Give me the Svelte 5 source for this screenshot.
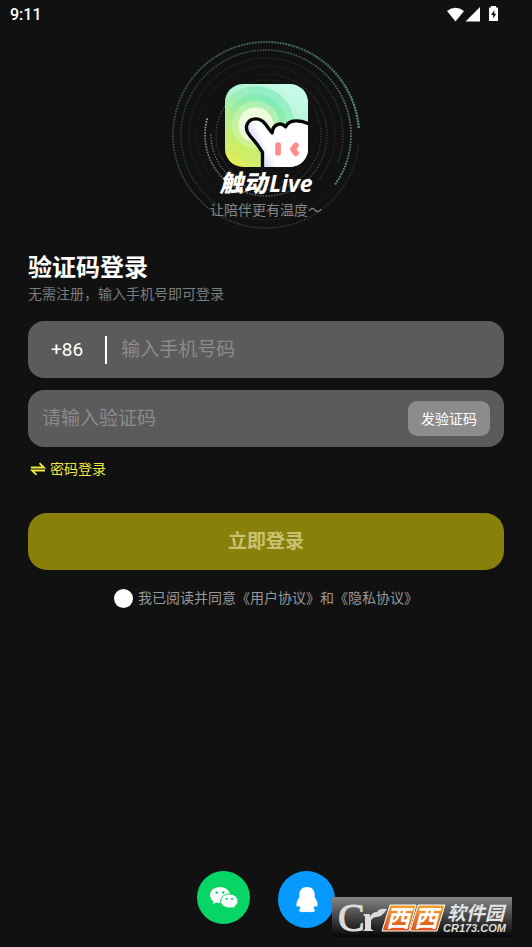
<script>
  let phone = $state('');
  let code = $state('');
  let agreed = $state(false);

  // Each orbit is a trail of dots that fades out behind its head.
  const orbits = [
    { r: 93, head: -5, dir: -1, span: 350, near: 1, far: 0.22, dot: 1.2, color: '#5f9d86' },
    { r: 85, head: 35, dir: -1, span: 350, near: 0.95, far: 0.16, dot: 1.1, color: '#6b9a8a' },
    { r: 77, head: 20, dir: -1, span: 340, near: 0.6, far: 0.2, dot: 0.8, color: '#5c8078' },
    { r: 69, head: 40, dir: -1, span: 340, near: 0.45, far: 0.18, dot: 0.7, color: '#5c8078' },
    { r: 61, head: 195, dir: -1, span: 300, near: 1, far: 0.15, dot: 1, color: '#8fa39d' },
    { r: 55, head: 180, dir: -1, span: 330, near: 0.8, far: 0.18, dot: 0.8, color: '#8fa39d' },
    { r: 50, head: 240, dir: -1, span: 240, near: 0.8, far: 0.2, dot: 0.7, color: '#78958c' }
  ];

  const dots = orbits.flatMap((o) => {
    const count = Math.round((o.r * o.span * Math.PI) / 180 / 2.8);
    return Array.from({ length: count }, (_, i) => {
      const t = i / count;
      const a = ((o.head + o.dir * t * o.span) * Math.PI) / 180;
      return {
        x: 96 + o.r * Math.cos(a),
        y: 96 + o.r * Math.sin(a),
        r: o.dot * (1 - t * 0.3),
        o: o.near + (o.far - o.near) * Math.sqrt(t),
        c: o.color
      };
    });
  });
</script>

<div class="screen">
  <header class="status">
    <span>9:11</span>
    <svg width="54" height="18" viewBox="0 0 54 18" fill="#fff" aria-hidden="true">
      <path d="M1 5Q9.500-1.500 18 5L9.500 15.500Z" />
      <path d="M34 1V15.500H19.500Z" />
      <path d="M45 0H50V1.500H51.500Q52 1.500 52 2V14.500Q52 15 51.500 15H43.500Q43 15 43 14.500V2Q43 1.500 43.500 1.500H45Z" />
      <path d="M48.500 4 45 9H47.200V12.500L50.300 7.700H48.200Z" fill="#111" />
    </svg>
  </header>

  <section class="hero">
    <svg class="orbits" width="192" height="192" viewBox="0 0 192 192" aria-hidden="true">
      {#each dots as d}
        <circle cx={d.x} cy={d.y} r={d.r} fill={d.c} opacity={d.o} />
      {/each}
    </svg>
    <svg class="logo" width="83" height="83" viewBox="0 0 248 248" aria-hidden="true">
      <defs>
        <linearGradient id="bg" x1="0.1" y1="1" x2="0.8" y2="0">
          <stop offset="0" stop-color="#e3ea3c" />
          <stop offset="0.3" stop-color="#c4f08a" />
          <stop offset="0.6" stop-color="#a4f3cc" />
          <stop offset="1" stop-color="#c8fbea" />
        </linearGradient>
        <linearGradient id="halo" x1="0" y1="1" x2="0.5" y2="0">
          <stop offset="0" stop-color="#dcea3c" />
          <stop offset="0.45" stop-color="#b8ee84" />
          <stop offset="1" stop-color="#72e8b4" />
        </linearGradient>
        <linearGradient id="hand" gradientUnits="userSpaceOnUse" x1="70" y1="190" x2="130" y2="160">
          <stop offset="0.3" stop-color="#dcdcf4" />
          <stop offset="0.8" stop-color="#fff" />
        </linearGradient>
        <clipPath id="tile"><rect width="248" height="248" rx="54" /></clipPath>
      </defs>
      <g clip-path="url(#tile)">
        <rect width="248" height="248" fill="url(#bg)" />
        <circle cx="92" cy="122" r="150" fill="#fff" opacity="0.1" />
        <circle cx="92" cy="122" r="116" fill="url(#halo)" opacity="0.55" />
        <circle cx="92" cy="122" r="92" fill="url(#halo)" opacity="0.6" />
        <circle cx="92" cy="122" r="71" fill="#dcf8b8" opacity="0.45" />
        <circle cx="92" cy="122" r="52" fill="#effcdf" opacity="0.95" />
        <path
          d="M112 260V204Q96 178 74 154C54 130 67 104 93 104C115 104 125 128 141 146C143 120 166 112 181 128C190 106 225 104 260 124V260Z"
          fill="url(#hand)" stroke="#050505" stroke-width="10" stroke-linejoin="round" />
        <rect x="150" y="174" width="17" height="40" rx="8" fill="#ff8b8c" />
        <path d="M212 183 203 195 212 207" fill="none" stroke="#ff8b8c" stroke-width="17" stroke-linecap="round" stroke-linejoin="round" />
      </g>
    </svg>
    <p class="brand">触动<span>Live</span></p>
    <p class="slogan">让陪伴更有温度～</p>
  </section>

  <main>
    <h1>验证码登录</h1>
    <p class="hint">无需注册，输入手机号即可登录</p>

    <form onsubmit={(e) => e.preventDefault()}>
      <div class="field">
        <button type="button" class="prefix">+86</button>
        <input type="tel" aria-label="手机号码" placeholder="输入手机号码" bind:value={phone} />
      </div>
      <div class="field">
        <input type="text" aria-label="验证码" placeholder="请输入验证码" bind:value={code} />
        <button type="button" class="send">发验证码</button>
      </div>
      <a class="switch" href="#password">
        <svg width="16" height="14" viewBox="0 0 16 14" fill="none" stroke="#f0e63c" stroke-width="1.800" aria-hidden="true">
          <path d="M1 5.500H14L9.500 1.200M15 8.500H2L6.500 12.800" />
        </svg>
        密码登录
      </a>
      <button type="submit" class="submit">立即登录</button>
      <div class="agree">
        <input id="agree" type="checkbox" bind:checked={agreed} />
        <label for="agree">我已阅读并同意<a href="#terms">《用户协议》</a>和<a href="#privacy">《隐私协议》</a></label>
      </div>
    </form>
  </main>

  <footer>
    <button type="button" class="wechat" aria-label="微信登录">
      <svg width="30" height="24" viewBox="0 0 30 24" aria-hidden="true">
        <path d="M11 1C5.200 1 1 4.600 1 9.200C1 11.800 2.400 14 4.600 15.500L3.700 18.300L7.200 16.600Q9 17.100 11 17.100C16.800 17.100 21 13.700 21 9.200S16.800 1 11 1Z" fill="#fff" />
        <circle cx="7.700" cy="6.500" r="1.300" fill="#07d566" />
        <circle cx="14.200" cy="6.500" r="1.300" fill="#07d566" />
        <path d="M20.300 8C15.500 8 11.700 11 11.700 15S15.500 22 20.300 22Q22 22 23.500 21.500L26.500 23L25.700 20.500C27.700 19.200 28.900 17.300 28.900 15C28.900 11 25.100 8 20.300 8Z" fill="#fff" stroke="#07d566" />
        <circle cx="17.500" cy="12.800" r="1.100" fill="#07d566" />
        <circle cx="23" cy="12.800" r="1.100" fill="#07d566" />
      </svg>
    </button>
    <button type="button" class="qq" aria-label="QQ登录">
      <svg width="22" height="26" viewBox="0 0 22 26" fill="#fff" aria-hidden="true">
        <path d="M11 0C6 0 3.300 3.400 3.300 7.500V10.200C1.900 12.300 .4 15 .4 17.600C.4 19.500 1.300 20.400 3.300 18.800C3.600 20 4 20.800 4.600 21.500C3.300 22 2.800 23 3.200 24.100C3.700 25.400 8.700 25.400 11 24.800C13.300 25.400 18.300 25.400 18.800 24.100C19.200 23 18.700 22 17.400 21.500C18 20.800 18.400 20 18.700 18.800C20.700 20.400 21.600 19.500 21.600 17.600C21.600 15 20.100 12.300 18.700 10.200V7.500C18.700 3.400 16 0 11 0Z" />
      </svg>
    </button>
  </footer>

  <svg class="stamp" width="180" height="40" viewBox="0 0 180 40" role="img" aria-label="西西软件园">
    <defs>
      <linearGradient id="plate" x1="0" y1="0" x2="0" y2="1">
        <stop offset="0" stop-color="#858585" />
        <stop offset="0.5" stop-color="#454545" />
        <stop offset="1" stop-color="#060606" />
      </linearGradient>
      <linearGradient id="orange" x1="0" y1="0" x2="0" y2="1">
        <stop offset="0" stop-color="#f0a22c" />
        <stop offset="1" stop-color="#e2501c" />
      </linearGradient>
    </defs>
    <rect width="180" height="40" fill="url(#plate)" />
    <g fill="#dcdcdc">
      <text x="6" y="34" class="serif" stroke="#dcdcdc">C</text>
      <path d="M31 17H38V20Q40 15 45 15Q47 11 55 12Q51 19 45 20Q40 20 39 24V32L42 34H31L33 32V20Z" />
    </g>
    <g fill="url(#orange)" stroke="#fff">
      <path d="M58 8H84L77 34H50Z" />
      <path d="M86 8H113L105 34H78Z" />
    </g>
    <g class="xi" fill="#fff">
      <text x="54" y="30">西</text>
      <text x="82" y="30">西</text>
    </g>
    <text x="115" y="23" class="park" fill="#e4e4e4">软件园</text>
    <text x="111" y="35" class="site" fill="#dedede">CR173.COM</text>
  </svg>
</div>

<style>
  :global(body) {
    margin: 0;
    background: #111;
  }
  .screen {
    position: relative;
    display: flex;
    flex-direction: column;
    min-height: 100vh;
    background: #111;
    color: #fff;
    font-family: Roboto, 'Noto Sans CJK SC', sans-serif;
    font-size: 14px;
    line-height: 20px;
  }
  h1,
  p {
    margin: 0;
  }
  button,
  input {
    font: inherit;
    color: inherit;
    border: 0;
    padding: 0;
    background: none;
  }
  button {
    cursor: pointer;
  }
  a {
    color: inherit;
    text-decoration: none;
  }
  .status {
    display: flex;
    justify-content: space-between;
    align-items: center;
    height: 30px;
    padding: 0 32px 0 10px;
    font-size: 16px;
    font-weight: 500;
  }
  .hero {
    position: relative;
    display: flex;
    flex-direction: column;
    align-items: center;
    padding-top: 54px;
  }
  .orbits {
    position: absolute;
    top: 9px;
    left: calc(50% - 96px);
  }
  .logo {
    position: relative;
    display: block;
  }
  .brand {
    position: relative;
    font-size: 24px;
    font-weight: 900;
    font-style: italic;
    line-height: 32px;
  }
  .brand span {
    margin-left: 2px;
    font-family: 'Noto Sans', 'Open Sans', sans-serif;
    font-size: 23px;
    font-weight: 700;
  }
  .slogan {
    position: relative;
    color: #858585;
  }
  main {
    padding: 32px 28px 0;
  }
  h1 {
    font-size: 24px;
    font-weight: 700;
    line-height: 32px;
  }
  .hint {
    color: #7c7c7c;
  }
  form {
    display: flex;
    flex-direction: column;
    margin-top: 17px;
  }
  .field {
    display: flex;
    align-items: center;
    height: 57px;
    margin-bottom: 12px;
    padding: 0 14px;
    border-radius: 16px;
    background: #5b5b5b;
    font-size: 19px;
  }
  .field input {
    flex: 1;
    min-width: 0;
    height: 40px;
    outline: none;
  }
  .field input::placeholder {
    color: #8b8b8b;
    opacity: 1;
  }
  .prefix {
    height: 28px;
    margin-right: 14px;
    padding: 0 22px 0 9px;
    border-right: 2px solid #fff;
  }
  .send {
    height: 35px;
    padding: 0 13px;
    border-radius: 9px;
    background: #8c8c8c;
    font-size: 14px;
  }
  .switch {
    display: flex;
    align-items: center;
    align-self: flex-start;
    gap: 4px;
    padding-left: 2px;
    color: #f0e63c;
  }
  .submit {
    height: 57px;
    margin-top: 34px;
    border-radius: 19px;
    background: #88800b;
    color: #c8c371;
    font-size: 19px;
    font-weight: 700;
  }
  .agree {
    display: flex;
    justify-content: center;
    align-items: center;
    gap: 5px;
    margin-top: 18px;
    color: #989898;
  }
  .agree input {
    appearance: none;
    width: 19px;
    height: 19px;
    margin: 0;
    border-radius: 50%;
    background: #fff;
  }
  .agree input:checked {
    border: 5px solid #fff;
    background: #88800b;
  }
  footer {
    display: flex;
    justify-content: center;
    align-items: flex-start;
    gap: 28px;
    margin-top: auto;
    padding: 32px 0 19px;
  }
  footer button {
    display: flex;
    justify-content: center;
    align-items: center;
    border-radius: 50%;
  }
  .wechat {
    width: 53px;
    height: 53px;
    background: #07d566;
  }
  .qq {
    width: 57px;
    height: 57px;
    background: #069aff;
  }
  .stamp {
    position: absolute;
    right: 20px;
    bottom: 10px;
    overflow: visible;
  }
  .serif {
    font-family: 'Liberation Serif', serif;
    font-size: 40px;
  }
  .xi,
  .park {
    font-family: 'Noto Sans CJK SC', sans-serif;
    font-style: italic;
    font-weight: 700;
  }
  .xi {
    font-size: 24px;
  }
  .park {
    font-size: 19px;
  }
  .site {
    font-family: 'Liberation Sans', sans-serif;
    font-size: 11px;
    font-style: italic;
    font-weight: 700;
  }
</style>
